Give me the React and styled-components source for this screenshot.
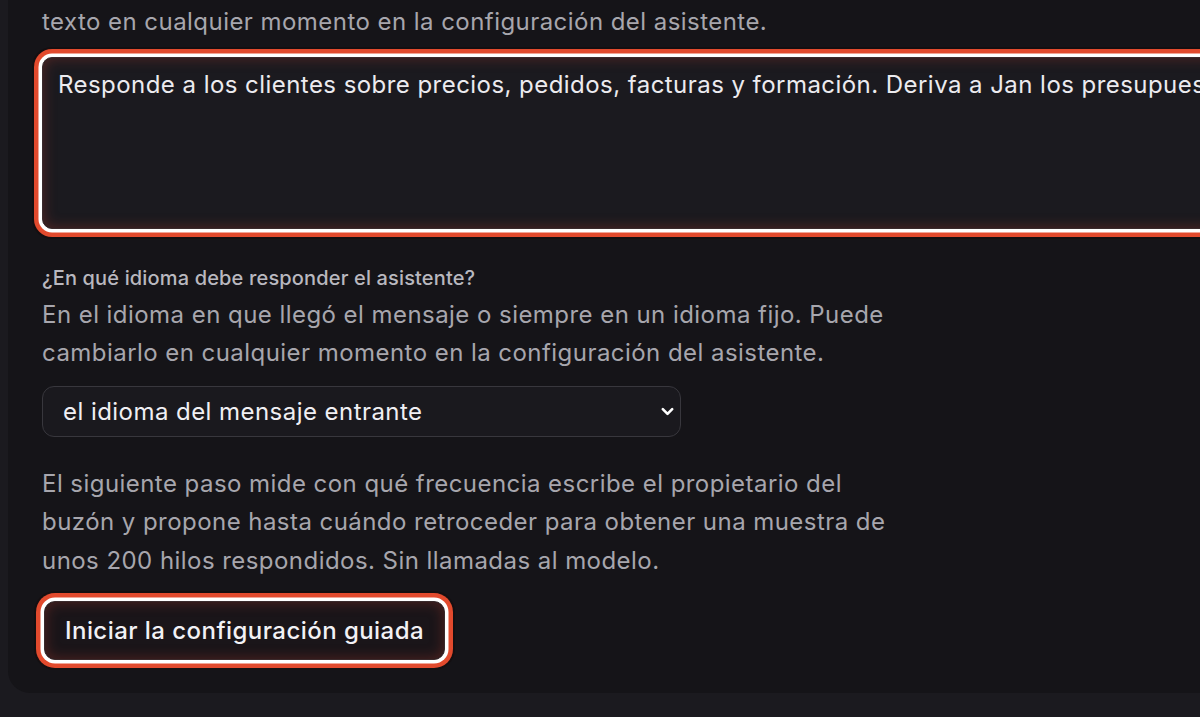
import React from "react";
import styled, { createGlobalStyle } from "styled-components";

const Global = createGlobalStyle`
  html, body { margin: 0; padding: 0; background: #1b1a1f; overflow: hidden; }
  body { font-family: Inter, "Noto Sans", sans-serif; color: #e9e8ec; }
`;

const Page = styled.div`
  width: 1200px;
  height: 717px;
  overflow: hidden;
  padding-left: 8px;
  box-sizing: border-box;
`;

const Card = styled.section`
  width: 1500px;
  background: #151418;
  border-radius: 0 0 22px 22px;
  padding: 3px 34px 33px 34px;
  box-sizing: border-box;
  display: flex;
  flex-direction: column;
  align-items: flex-start;
`;

const Para = styled.p`
  margin: 0;
  margin-top: ${(p) => p.$mt || 0}px;
  max-width: 860px;
  font-size: 24px;
  letter-spacing: 0.45px;
  line-height: 38.5px;
  color: #a7a6ad;
`;

const Label = styled.label`
  display: block;
  margin-top: 36px;
  font-size: 20px;
  letter-spacing: 0.15px;
  line-height: 27px;
  font-weight: 500;
  color: #b9b8bf;
`;

const focusRing = `
  box-shadow: 0 0 0 3.5px #ffffff, 0 0 0 8px #e24a2d,
    0 0 0 10px rgba(20, 10, 10, 0.5),
    inset 0 0 14px rgba(190, 60, 45, 0.35);
`;

const TextArea = styled.textarea`
  margin-top: 15px;
  width: 1400px;
  height: 172px;
  box-sizing: border-box;
  padding: 11px 15px;
  background: #1b1a1f;
  border: 1px solid #3a2a2c;
  border-radius: 10px;
  color: #ecebef;
  font-family: Inter, "Noto Sans", sans-serif;
  font-size: 24px;
  letter-spacing: 0.45px;
  line-height: 32px;
  resize: none;
  outline: none;
  ${focusRing}
`;

const SelectWrap = styled.div`
  position: relative;
  margin-top: 13px;
  width: 639px;
  height: 51px;
`;

const Select = styled.select`
  appearance: none;
  width: 100%;
  height: 100%;
  box-sizing: border-box;
  padding: 0 44px 0 20px;
  background: #1a191e;
  border: 1px solid #38373d;
  border-radius: 12px;
  color: #f0eff3;
  font-family: Inter, "Noto Sans", sans-serif;
  font-size: 24px;
  letter-spacing: 0.45px;
  outline: none;
`;

const Chevron = styled.svg`
  position: absolute;
  right: 6px;
  top: 18px;
  width: 15px;
  height: 15px;
  pointer-events: none;
`;

const Button = styled.button`
  margin-top: 21px;
  margin-left: 2px;
  height: 59px;
  padding: 0 20px;
  background: #1a1519;
  border: 1px solid #3a2a2c;
  border-radius: 11px;
  color: #f2f1f5;
  font-family: Inter, "Noto Sans", sans-serif;
  font-size: 24px;
  letter-spacing: 0.45px;
  font-weight: 500;
  cursor: pointer;
  outline: none;
  ${focusRing}
`;

export default function App() {
  return (
    <>
      <Global />
      <Page>
        <Card>
          <Para>texto en cualquier momento en la configuración del asistente.</Para>
          <TextArea
            defaultValue="Responde a los clientes sobre precios, pedidos, facturas y formación. Deriva a Jan los presupuestos especiales."
          />
          <Label>¿En qué idioma debe responder el asistente?</Label>
          <Para $mt={4}>
            En el idioma en que llegó el mensaje o siempre en un idioma fijo. Puede
            cambiarlo en cualquier momento en la configuración del asistente.
          </Para>
          <SelectWrap>
            <Select defaultValue="in">
              <option value="in">el idioma del mensaje entrante</option>
              <option value="fixed">un idioma fijo</option>
            </Select>
            <Chevron viewBox="0 0 16 16">
              <path d="M3 5.5 L8 10.5 L13 5.5" fill="none" stroke="#ffffff" strokeWidth="2.8" strokeLinecap="round" strokeLinejoin="round" />
            </Chevron>
          </SelectWrap>
          <Para $mt={28}>
            El siguiente paso mide con qué frecuencia escribe el propietario del
            buzón y propone hasta cuándo retroceder para obtener una muestra de
            unos 200 hilos respondidos. Sin llamadas al modelo.
          </Para>
          <Button>Iniciar la configuración guiada</Button>
        </Card>
      </Page>
    </>
  );
}
